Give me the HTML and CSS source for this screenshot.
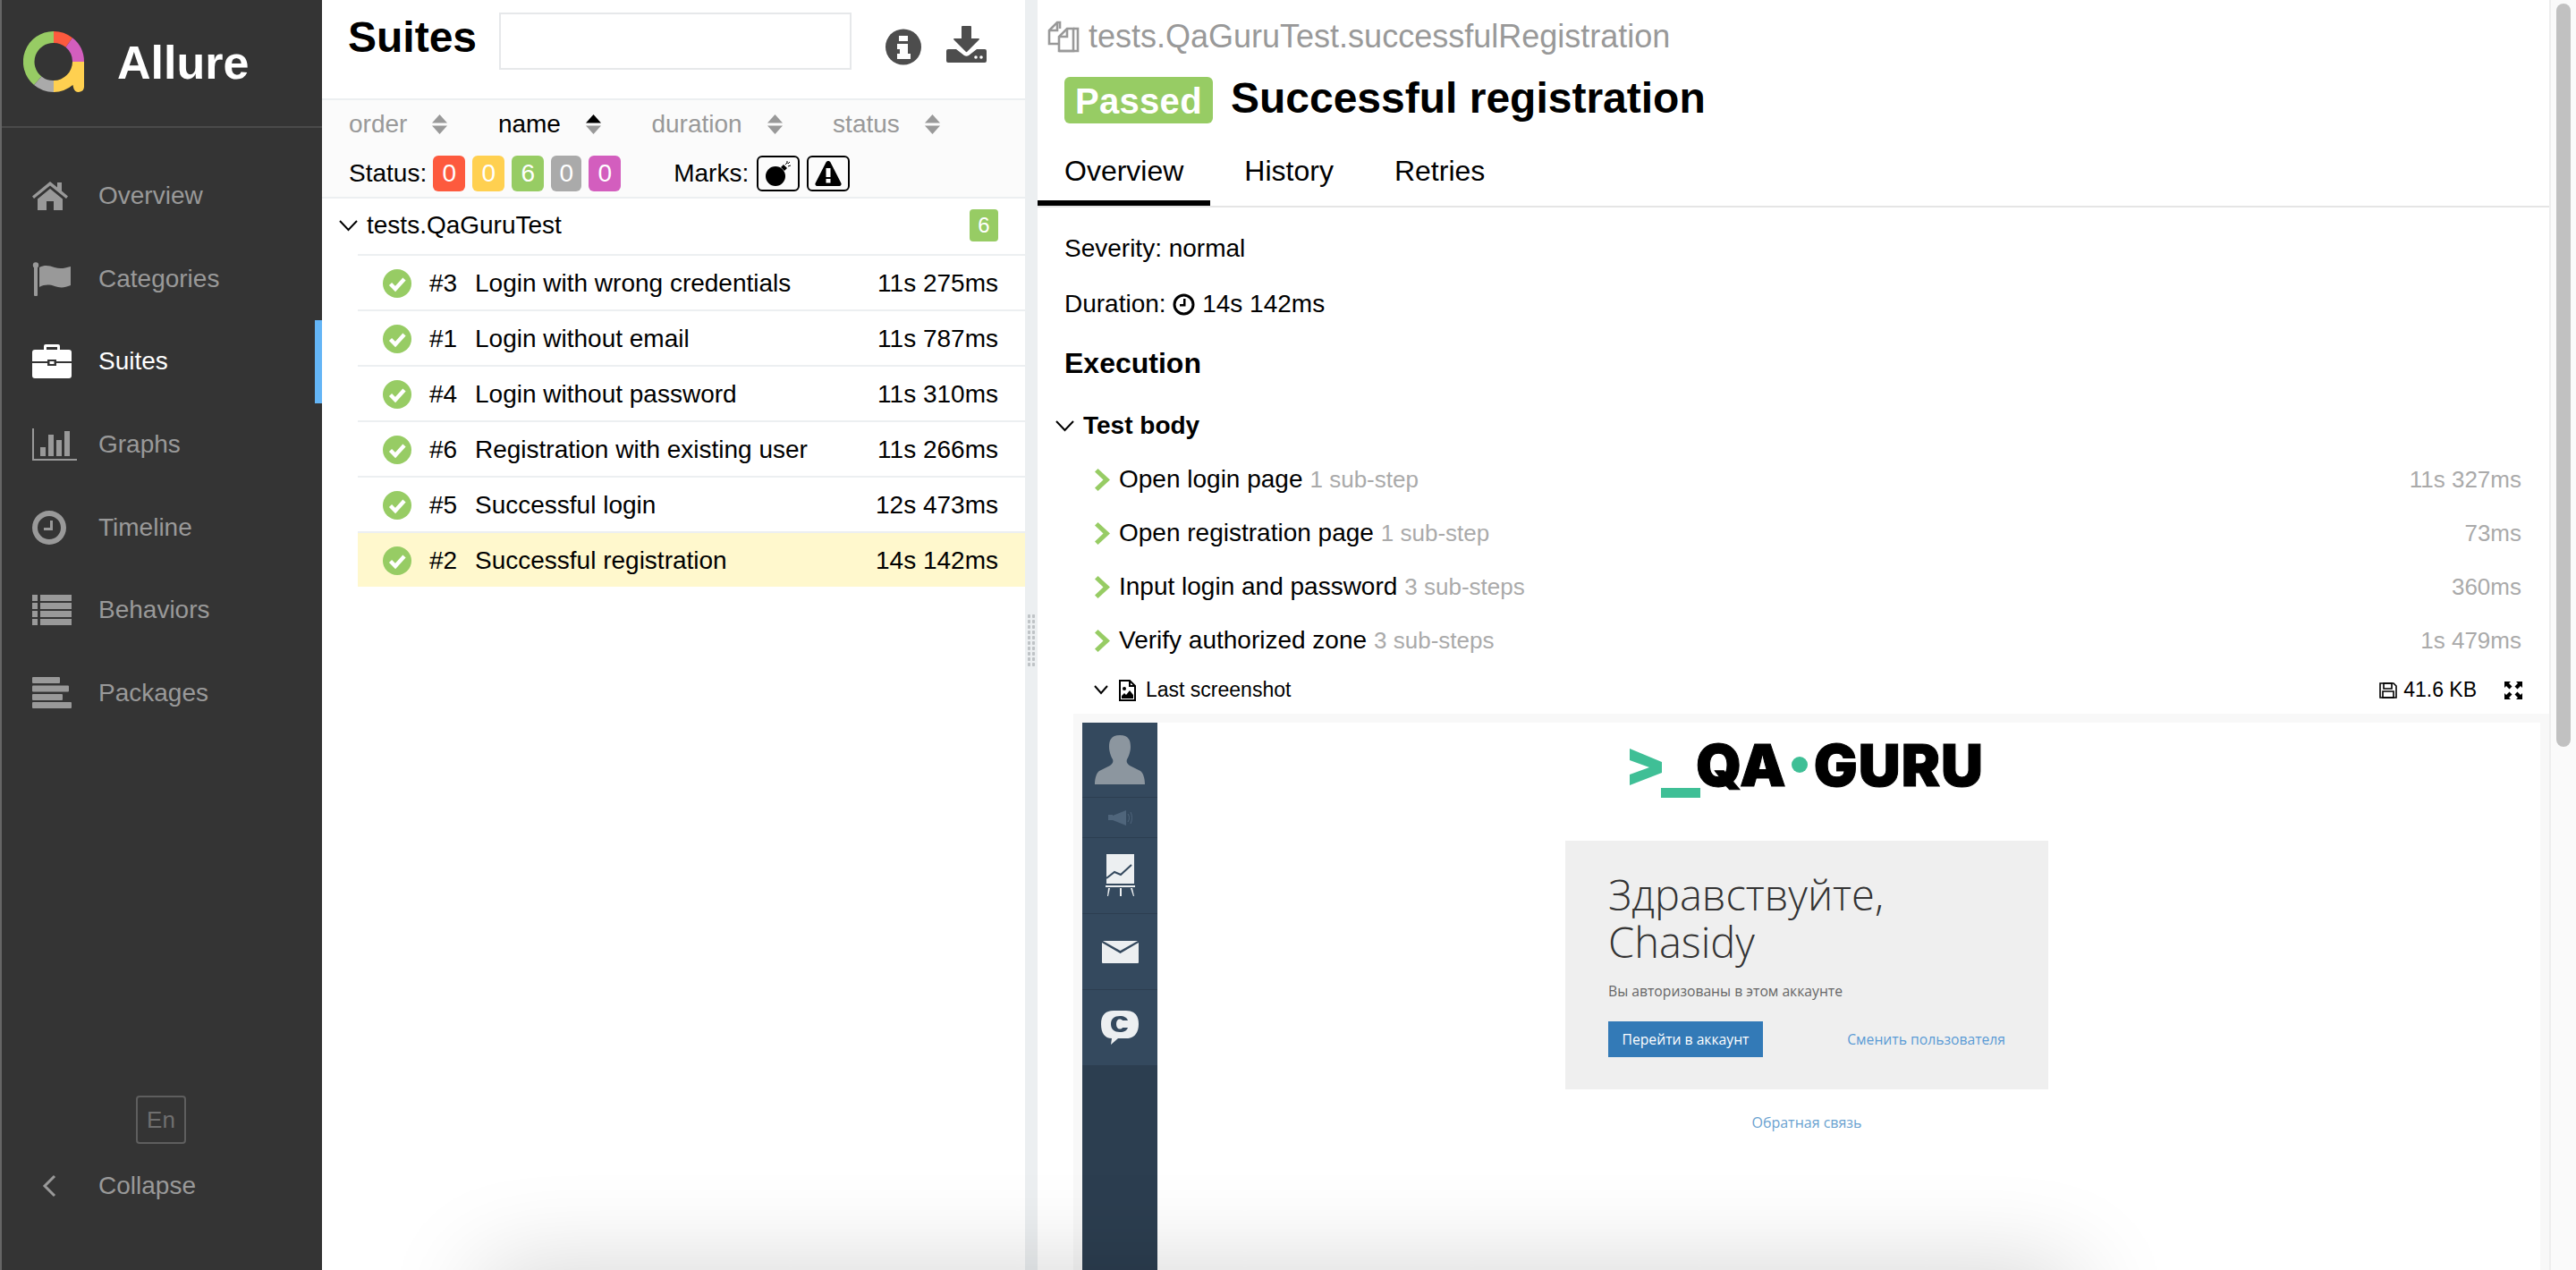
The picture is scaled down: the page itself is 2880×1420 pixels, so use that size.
FILE: index.html
```html
<!DOCTYPE html>
<html lang="en">
<head>
  <meta charset="UTF-8">
  <title>Allure Report</title>
  <link rel="stylesheet" href="styles.css">
</head>
<body>
  <svg class="defs" xmlns="http://www.w3.org/2000/svg">
    <symbol id="sort" viewBox="0 0 17 22">
      <path d="M8.5 0L17 9.5H0z"></path>
      <path d="M0 12.5h17L8.5 22z"></path>
    </symbol>
    <symbol id="passed" viewBox="0 0 32 32">
      <circle cx="16" cy="16" r="16" fill="#97cc64"></circle>
      <path d="M8.5 16.5l5.5 5.5 10-11" fill="none" stroke="#fff" stroke-width="4.4"></path>
    </symbol>
    <symbol id="step-arrow" viewBox="0 0 17 25">
      <path d="M0 3.5L3.5 0 17 12.5 3.5 25 0 21.5 9.5 12.5z"></path>
    </symbol>
  </svg>

  <aside class="sidebar">
    <div class="brand">
      <svg class="brand-logo" viewBox="0 0 68 68">
        <path d="M34 0A34 34 0 0 0 12 60l8.4-9.6A21 21 0 0 1 34 13z" fill="#97cc64"></path>
        <path d="M34 0a34 34 0 0 1 21 7.3l-7.5 10.5A21 21 0 0 0 34 13z" fill="#fd5a3e"></path>
        <path d="M55 7.3A34 34 0 0 1 68 34H55a21 21 0 0 0-7.5-16.2z" fill="#d35ebe"></path>
        <path d="M68 34v28a6 6 0 0 1-11.600 2l-1-4A34 34 0 0 1 34 68V55a21 21 0 0 0 21-21z" fill="#ffd050"></path>
        <path d="M12 60l8.400-9.600A21 21 0 0 0 34 55v13a34 34 0 0 1-22-8z" fill="#aaa"></path>
      </svg>
      <span class="brand-name">Allure</span>
    </div>
    <nav class="nav">
      <a class="nav-item">
        <span class="nav-icon">
          <svg width="40" height="32" viewBox="0 0 40 32"><path d="M20 0L0 16.500l2 2.500L20 4.500 38 19l2-2.500-7-6V1h-5v5.500z"></path><path d="M6 19.500L20 8l14 11.500V32H24V22h-8v10H6z"></path></svg>
        </span>
        Overview
      </a>
      <a class="nav-item">
        <span class="nav-icon">
          <svg width="44" height="38" viewBox="0 0 44 38"><circle cx="4" cy="3.500" r="3.200"></circle><rect x="2" y="4" width="4" height="34" rx="1"></rect><path d="M8 6c6-3 11-2 17 0 6 2 11 1 18-1v21c-7 3-12 3-18 1-6-2-11-2-17 1z"></path></svg>
        </span>
        Categories
      </a>
      <a class="nav-item active">
        <span class="nav-icon">
          <svg width="44" height="38" viewBox="0 0 44 38"><path d="M13 6V2a2 2 0 0 1 2-2h14a2 2 0 0 1 2 2v4h-3V3H16v3z"></path><path d="M3 6h38a3 3 0 0 1 3 3v10H27v-2H17v2H0V9a3 3 0 0 1 3-3z"></path><path d="M0 21h17v3h10v-3h17v14a3 3 0 0 1-3 3H3a3 3 0 0 1-3-3z"></path><rect x="19.500" y="19" width="5" height="3"></rect></svg>
        </span>
        Suites
      </a>
      <a class="nav-item">
        <span class="nav-icon">
          <svg width="50" height="36" viewBox="0 0 50 36"><path d="M0 0h2v34h48v2H0z"></path><rect x="9" y="21" width="6" height="10"></rect><rect x="18" y="7" width="6" height="24"></rect><rect x="27" y="13" width="6" height="18"></rect><rect x="36" y="3" width="6" height="28"></rect></svg>
        </span>
        Graphs
      </a>
      <a class="nav-item">
        <span class="nav-icon">
          <svg width="38" height="38" viewBox="0 0 38 38"><path d="M19 0a19 19 0 1 0 0 38 19 19 0 0 0 0-38zm0 6a13 13 0 1 1 0 26 13 13 0 0 1 0-26z"></path><path d="M20 11h3v11h-10v-3h7z"></path></svg>
        </span>
        Timeline
      </a>
      <a class="nav-item">
        <span class="nav-icon">
          <svg width="44" height="34" viewBox="0 0 44 34"><rect width="6" height="7"></rect><rect y="9" width="6" height="7"></rect><rect y="18" width="6" height="7"></rect><rect y="27" width="6" height="7"></rect><rect x="9" width="35" height="7"></rect><rect x="9" y="9" width="35" height="7"></rect><rect x="9" y="18" width="35" height="7"></rect><rect x="9" y="27" width="35" height="7"></rect></svg>
        </span>
        Behaviors
      </a>
      <a class="nav-item">
        <span class="nav-icon">
          <svg width="44" height="35" viewBox="0 0 44 35"><rect width="31" height="7" rx="1"></rect><rect y="9.500" width="41" height="7" rx="1"></rect><rect y="19" width="34" height="7" rx="1"></rect><rect y="28" width="44" height="7" rx="1"></rect></svg>
        </span>
        Packages
      </a>
    </nav>
    <div class="sidebar-footer">
      <button class="lang-btn">En</button>
      <a class="nav-item collapse-item">
        <span class="nav-icon collapse-icon">
          <svg width="16" height="26" viewBox="0 0 16 26"><path d="M14 2L3 13l11 11" fill="none" stroke="#999" stroke-width="3"></path></svg>
        </span>
        Collapse
      </a>
    </div>
  </aside>

  <main class="suites">
    <header class="suites-head">
      <h2 class="suites-title">Suites</h2>
      <input class="search" type="text">
      <svg class="head-icon info-icon" viewBox="0 0 40 41"><circle cx="20" cy="20.500" r="20" fill="#4d4d4d"></circle><path d="M15 8h10v6H15zM13 17h12v11h3v6H13v-6h3v-5h-3z" fill="#fff"></path></svg>
      <svg class="head-icon download-icon" viewBox="0 0 45 41"><path d="M18 0h9a1 1 0 0 1 1 1v13h8a1 1 0 0 1 1 1L23 29a1 1 0 0 1-1 0L8 15a1 1 0 0 1 1-1h8V1a1 1 0 0 1 1-1z" fill="#4d4d4d"></path><path d="M2 26h9l9 7c1.500 1 3.500 1 5 0l9-7h9a2 2 0 0 1 2 2v11a2 2 0 0 1-2 2H2a2 2 0 0 1-2-2V28a2 2 0 0 1 2-2z" fill="#4d4d4d"></path><circle cx="33" cy="35" r="1.800" fill="#fff"></circle><circle cx="39" cy="35" r="1.800" fill="#fff"></circle></svg>
    </header>

    <div class="toolbar">
      <div class="sorters">
        <span class="sorter">order<svg class="sort-icon"><use href="#sort"></use></svg></span>
        <span class="sorter sorter-on">name<svg class="sort-icon" viewBox="0 0 17 22"><path d="M8.500 0L17 9.500H0z" fill="#000"></path><path d="M0 12.500h17L8.500 22z" fill="#999"></path></svg></span>
        <span class="sorter">duration<svg class="sort-icon"><use href="#sort"></use></svg></span>
        <span class="sorter">status<svg class="sort-icon"><use href="#sort"></use></svg></span>
      </div>
      <div class="filters">
        <span class="filter-label">Status:</span>
        <span class="badge badge-failed">0</span>
        <span class="badge badge-broken">0</span>
        <span class="badge badge-passed">6</span>
        <span class="badge badge-skipped">0</span>
        <span class="badge badge-unknown">0</span>
        <span class="filter-label marks-label">Marks:</span>
        <span class="mark">
          <svg width="30" height="30" viewBox="0 0 30 30"><circle cx="12" cy="18" r="11"></circle><path d="M18 8l3-3 4 4-3 3z"></path><path d="M23 5l2-2M26 7l3-1M25 1v3M28 2l-2 2" fill="none" stroke="#000" stroke-width="1"></path></svg>
        </span>
        <span class="mark">
          <svg width="30" height="28" viewBox="0 0 30 28"><path d="M15 0c1 0 2 .5 2.500 1.500L29.500 25c.5 1.500-.5 3-2 3h-25c-1.500 0-2.500-1.500-2-3L12.500 1.500C13 .5 14 0 15 0z"></path><rect x="12.500" y="8" width="5" height="10" fill="#fff"></rect><rect x="12.500" y="20" width="5" height="4.500" fill="#fff"></rect></svg>
        </span>
      </div>
    </div>

    <div class="tree">
      <div class="group">
        <svg class="chevron" width="21" height="13" viewBox="0 0 21 13"><path d="M1 1l9.500 10L20 1" fill="none" stroke="#000" stroke-width="2"></path></svg>
        <span class="group-name">tests.QaGuruTest</span>
        <span class="group-count">6</span>
      </div>
      <div class="row">
        <svg class="status-icon"><use href="#passed"></use></svg>
        <span class="row-order">#3</span><span class="row-name">Login with wrong credentials</span><span class="row-time">11s 275ms</span>
      </div>
      <div class="row">
        <svg class="status-icon"><use href="#passed"></use></svg>
        <span class="row-order">#1</span><span class="row-name">Login without email</span><span class="row-time">11s 787ms</span>
      </div>
      <div class="row">
        <svg class="status-icon"><use href="#passed"></use></svg>
        <span class="row-order">#4</span><span class="row-name">Login without password</span><span class="row-time">11s 310ms</span>
      </div>
      <div class="row">
        <svg class="status-icon"><use href="#passed"></use></svg>
        <span class="row-order">#6</span><span class="row-name">Registration with existing user</span><span class="row-time">11s 266ms</span>
      </div>
      <div class="row">
        <svg class="status-icon"><use href="#passed"></use></svg>
        <span class="row-order">#5</span><span class="row-name">Successful login</span><span class="row-time">12s 473ms</span>
      </div>
      <div class="row row-selected">
        <svg class="status-icon"><use href="#passed"></use></svg>
        <span class="row-order">#2</span><span class="row-name">Successful registration</span><span class="row-time">14s 142ms</span>
      </div>
    </div>
  </main>

  <div class="splitter"><span class="splitter-grip"></span></div>

  <section class="detail">
    <div class="detail-path">
      <svg class="copy-icon" width="36" height="36" viewBox="0 0 36 36" fill="none" stroke="#999" stroke-width="2.600"><path d="M14 9V2h-3L2 11v15h11"></path><path d="M11 2v9H2"></path><path d="M13 34V18l9-9h7v25z" fill="#fff"></path><path d="M22 9v9h-9"></path><path d="M29 9h5v25H13"></path></svg>
      <span>tests.QaGuruTest.successfulRegistration</span>
    </div>
    <div class="detail-title">
      <span class="status-pill">Passed</span>
      <h2 class="test-name">Successful registration</h2>
    </div>
    <div class="tabs">
      <a class="tab tab-on">Overview</a>
      <a class="tab">History</a>
      <a class="tab">Retries</a>
    </div>

    <div class="meta meta-first">Severity: normal</div>
    <div class="meta">Duration:
      <svg class="clock" width="25" height="25" viewBox="0 0 25 25"><circle cx="12.500" cy="12.500" r="10.500" fill="none" stroke="#000" stroke-width="3"></circle><path d="M12 6h2.500v8.500H8V12h4z"></path></svg>
      14s 142ms</div>
    <h3 class="exec-title">Execution</h3>

    <div class="body-head">
      <svg class="chevron" width="21" height="13" viewBox="0 0 21 13"><path d="M1 1l9.500 10L20 1" fill="none" stroke="#000" stroke-width="2"></path></svg>
      Test body
    </div>
    <div class="step">
      <svg class="step-arrow"><use href="#step-arrow"></use></svg>
      <span class="step-name">Open login page</span><span class="step-sub">1 sub-step</span>
      <span class="step-time">11s 327ms</span>
    </div>
    <div class="step">
      <svg class="step-arrow"><use href="#step-arrow"></use></svg>
      <span class="step-name">Open registration page</span><span class="step-sub">1 sub-step</span>
      <span class="step-time">73ms</span>
    </div>
    <div class="step">
      <svg class="step-arrow"><use href="#step-arrow"></use></svg>
      <span class="step-name">Input login and password</span><span class="step-sub">3 sub-steps</span>
      <span class="step-time">360ms</span>
    </div>
    <div class="step">
      <svg class="step-arrow"><use href="#step-arrow"></use></svg>
      <span class="step-name">Verify authorized zone</span><span class="step-sub">3 sub-steps</span>
      <span class="step-time">1s 479ms</span>
    </div>

    <div class="attachment">
      <svg class="attach-chevron" width="16" height="11" viewBox="0 0 16 11"><path d="M1 1l7 8 7-8" fill="none" stroke="#000" stroke-width="2"></path></svg>
      <svg class="attach-file" width="19" height="24" viewBox="0 0 19 24"><path d="M1 1h11l6 6v16H1z" fill="#fff" stroke="#000" stroke-width="2"></path><path d="M12 1v6h6" fill="none" stroke="#000" stroke-width="2"></path><circle cx="6" cy="10" r="2"></circle><path d="M3 21v-3l3-3 2 2 4-5 4 5v4z"></path></svg>
      <span class="attach-name">Last screenshot</span>
      <svg class="attach-save" width="20" height="18" viewBox="0 0 20 18"><path d="M1 1h15l3 3v13H1z" fill="none" stroke="#000" stroke-width="1.600"></path><path d="M5 1h9v6H5zM4 10h12v7H4z" fill="none" stroke="#000" stroke-width="1.600"></path></svg>
      <span class="attach-size">41.6 KB</span>
      <svg class="attach-expand" width="20" height="20" viewBox="0 0 20 20"><path d="M0 0h7L5 2l3.500 3.500-3 3L2 5 0 7zM20 0v7l-2-2-3.500 3.500-3-3L15 2l-2-2zM0 20v-7l2 2 3.500-3.500 3 3L5 18l2 2zM20 20h-7l2-2-3.500-3.500 3-3L18 15l2-2z"></path></svg>
    </div>

    <div class="shot">
      <div class="shot-page">
        <div class="shot-nav">
          <div class="shot-nav-item shot-nav-user">
            <svg width="56" height="55" viewBox="0 0 56 55"><path d="M28 0c10 0 12 6 12 13 0 5-2 11-4 14-1 3 0 5 3 7l12 6c3 2 5 8 5 15H0c0-7 2-13 5-15l12-6c3-2 4-4 3-7-2-3-4-9-4-14 0-7 2-13 12-13z" fill="#8c969f"></path></svg>
          </div>
          <div class="shot-nav-item shot-nav-sound">
            <svg width="27" height="17" viewBox="0 0 27 17"><rect y="5" width="5" height="6" fill="#4f657b"></rect><path d="M5 6l15-6v17L5 11z" fill="#4f657b"></path><path d="M22 4c2 3 2 6 0 9M25 2c2 4 2 9 0 13" fill="none" stroke="#4f657b" stroke-width="1"></path></svg>
          </div>
          <div class="shot-nav-item">
            <svg width="33" height="48" viewBox="0 0 33 48"><rect x="1" width="31" height="33" fill="#eceff1"></rect><path d="M1 27l9-7 7 3 12-11" fill="none" stroke="#34495e" stroke-width="2"></path><path d="M0 35h33v2H0zM3 38h2l-2 9H2zM16 38h2v9h-2zM28 38h2l2 9h-1z" fill="#eceff1"></path></svg>
          </div>
          <div class="shot-nav-item">
            <svg width="41" height="25" viewBox="0 0 41 25"><path d="M1 0h39L20.500 11z" fill="#eceff1"></path><path d="M0 2l20.500 12L41 2v22a1 1 0 0 1-1 1H1a1 1 0 0 1-1-1z" fill="#eceff1"></path></svg>
          </div>
          <div class="shot-nav-item">
            <svg width="42" height="46" viewBox="0 0 42 46"><path d="M14 0h14c9 0 14 5 14 15s-5 16-14 16H19l-8 7 1-7C4 31 0 25 0 15S5 0 14 0z" fill="#eceff1" transform="translate(0 4)"></path><path d="M30 15c-1-3-4-5-9-5-6 0-10 3-10 9s4 9 10 9c5 0 8-2 9-5h-6c-.5 1-2 1.500-3 1.500-2.500 0-4-2-4-5.500s1.500-5.500 4-5.500c1 0 2.500.5 3 1.500z" fill="#34495e"></path></svg>
          </div>
        </div>
        <div class="shot-main">
          <div class="qa-logo">
            <svg class="qa-prompt" width="80" height="60" viewBox="0 0 80 60"><path d="M0 5l36 15v12L0 46V34l22-8L0 18z" fill="#3fbf96"></path><rect x="35" y="49" width="44" height="11" fill="#3fbf96"></rect></svg>
            <span class="qa-word">QA</span>
            <span class="qa-dot"></span>
            <span class="qa-word">GURU</span>
          </div>
          <div class="hello-card">
            <h1 class="hello-title">Здравствуйте,<br>Chasidy</h1>
            <p class="hello-text">Вы авторизованы в этом аккаунте</p>
            <div class="hello-actions">
              <a class="hello-btn">Перейти в аккаунт</a>
              <a class="hello-link">Сменить пользователя</a>
            </div>
          </div>
          <a class="feedback">Обратная связь</a>
        </div>
      </div>
    </div>
  </section>

  <div class="scrollbar"><span class="scroll-thumb"></span></div>

  <div class="window-shadow"></div>
</body>
</html>
```

FILE: styles.css
```css
* {
  margin: 0;
  padding: 0;
  box-sizing: border-box;
}

html, body {
  height: 100%;
  overflow: hidden;
}

body {
  display: flex;
  font-family: "Liberation Sans", Arial, sans-serif;
  font-size: 28px;
  color: #000;
  background-color: #fff;
}

.defs {
  position: absolute;
  width: 0;
  height: 0;
}

/* sidebar */
.sidebar {
  width: 360px;
  flex: none;
  display: flex;
  flex-direction: column;
  background-color: #343434;
  border-left: 2px solid #666;
}

.brand {
  height: 143px;
  flex: none;
  display: flex;
  align-items: center;
  padding-left: 24px;
  padding-bottom: 2px;
  border-bottom: 2px solid #4a4a4a;
}

.brand-logo {
  width: 68px;
  height: 68px;
  margin-bottom: 2px;
}

.brand-name {
  margin-left: 37px;
  font-size: 52px;
  font-weight: 700;
  color: #fff;
}

.nav {
  flex: 1;
  padding-top: 30px;
}

.nav-item {
  height: 92.6px;
  display: flex;
  align-items: center;
  padding-left: 34px;
  color: #999;
  position: relative;
}

.nav-item svg {
  fill: #999;
}

.nav-icon {
  width: 74px;
  flex: none;
  display: flex;
}

.nav-item.active {
  color: #fff;
}

.nav-item.active svg {
  fill: #fff;
}

.nav-item.active::after {
  content: '';
  position: absolute;
  top: 0;
  right: 0;
  bottom: 0;
  width: 8px;
  background-color: #64b5f6;
}

.sidebar-footer {
  flex: none;
  display: flex;
  flex-direction: column;
  padding-bottom: 48px;
}

.lang-btn {
  align-self: center;
  width: 56px;
  height: 54px;
  margin-right: 2px;
  margin-bottom: 1px;
  background: transparent;
  border: 2px solid #5e5e5e;
  border-radius: 4px;
  color: #6f6f6f;
  font-family: inherit;
  font-size: 26px;
}

.collapse-item {
  height: 92px;
}

.collapse-icon {
  padding-left: 11px;
}

/* suites pane */
.suites {
  width: 786px;
  flex: none;
  display: flex;
  flex-direction: column;
}

.suites-head {
  height: 112px;
  flex: none;
  display: flex;
  align-items: flex-start;
  border-bottom: 2px solid #eceff1;
}

.suites-title {
  margin: 14px 0 0 29px;
  font-size: 48px;
  line-height: 56px;
  font-weight: 700;
}

.search {
  width: 394px;
  height: 64px;
  margin: 14px 0 0 25px;
  border: 2px solid #e6e8ea;
  background-color: #fff;
}

.head-icon {
  flex: none;
}

.info-icon {
  width: 40px;
  height: 41px;
  margin: 32px 0 0 38px;
}

.download-icon {
  width: 45px;
  height: 41px;
  margin: 29px 0 0 28px;
}

.toolbar {
  height: 110px;
  flex: none;
  padding-left: 30px;
  background-color: #fbfbfb;
  border-bottom: 2px solid #eceff1;
}

.sorters {
  height: 54px;
  display: flex;
  align-items: center;
  gap: 56.5px;
}

.sorter {
  display: flex;
  align-items: center;
  gap: 28px;
  color: #999;
}

.sorter-on {
  color: #000;
}

.sort-icon {
  width: 17px;
  height: 22px;
  fill: #999;
}

.filters {
  display: flex;
  align-items: center;
  margin-top: 8px;
  gap: 8px;
}

.badge {
  width: 36px;
  height: 40px;
  display: flex;
  align-items: center;
  justify-content: center;
  border-radius: 6px;
  color: #fff;
}

.badge-failed {
  background-color: #fd5a3e;
}

.badge-broken {
  background-color: #ffd050;
}

.badge-passed {
  background-color: #97cc64;
}

.badge-skipped {
  width: 34px;
  background-color: #aaa;
}

.badge-unknown {
  background-color: #d35ebe;
}

.filter-label {
  margin-right: -1px;
}

.marks-label {
  margin-left: 51px;
  margin-right: 1px;
}

.mark {
  width: 48px;
  height: 40px;
  display: flex;
  align-items: center;
  justify-content: center;
  border: 2px solid #000;
  border-radius: 6px;
}

.group {
  height: 64px;
  display: flex;
  align-items: center;
  padding: 0 30px 4px 19px;
  position: relative;
}

.group::after {
  content: '';
  position: absolute;
  left: 40px;
  right: 0;
  bottom: 0;
  height: 2px;
  background-color: #eceff1;
}

.group .chevron {
  margin-right: 10px;
}

.group-name {
  flex: 1;
}

.group-count {
  width: 32px;
  height: 36px;
  display: flex;
  align-items: center;
  justify-content: center;
  border-radius: 4px;
  background-color: #97cc64;
  color: #fff;
  font-size: 24px;
}

.row {
  height: 62px;
  margin-left: 40px;
  display: flex;
  align-items: center;
  padding: 2px 30px 0 28px;
  border-bottom: 2px solid #eceff1;
}

.row-selected {
  background-color: #fff8cd;
  background-clip: padding-box;
  border-bottom-color: transparent;
}

.status-icon {
  width: 32px;
  height: 32px;
  flex: none;
  margin-right: 20px;
}

.row-order {
  width: 51px;
  flex: none;
}

.row-name {
  flex: 1;
}

/* splitter */
.splitter {
  width: 14px;
  flex: none;
  display: flex;
  align-items: center;
  justify-content: center;
  background-color: #eceff1;
}

.splitter-grip {
  width: 10px;
  height: 60px;
  background-image: radial-gradient(#bfc3c6 1.5px, transparent 2px);
  background-size: 5px 6px;
  margin-top: 12px;
}

/* detail pane */
.detail {
  flex: 1;
  min-width: 0;
  display: flex;
  flex-direction: column;
  overflow: hidden;
}

.detail-path {
  height: 82px;
  flex: none;
  display: flex;
  align-items: center;
  padding-left: 11px;
  font-size: 36px;
  color: #999;
}

.copy-icon {
  margin-right: 10px;
}

.detail-title {
  height: 70px;
  flex: none;
  display: flex;
  align-items: flex-start;
  padding: 4px 0 0 30px;
}

.status-pill {
  height: 52px;
  padding: 0 12px;
  border-radius: 6px;
  background-color: #97cc64;
  color: #fff;
  font-size: 40px;
  line-height: 54px;
  font-weight: 700;
  letter-spacing: 0.3px;
}

.test-name {
  margin-left: 20px;
  font-size: 48px;
  line-height: 48px;
  font-weight: 700;
}

.tabs {
  height: 80px;
  flex: none;
  display: flex;
  gap: 8px;
  border-bottom: 2px solid #e5e5e5;
}

.tab {
  height: 78px;
  padding: 0 30px;
  font-size: 32px;
  line-height: 78px;
}

.tab-on {
  border-bottom: 6px solid #000;
}

.meta {
  height: 62px;
  flex: none;
  padding-left: 30px;
  line-height: 62px;
}

.meta-first {
  margin-top: 15px;
}

.clock {
  vertical-align: -4px;
}

.exec-title {
  height: 60px;
  flex: none;
  margin-top: 5px;
  padding-left: 30px;
  font-size: 32px;
  line-height: 60px;
  font-weight: 700;
}

.body-head {
  height: 60px;
  flex: none;
  margin-top: 10px;
  display: flex;
  align-items: center;
  padding-left: 20px;
  font-weight: 700;
}

.body-head .chevron {
  margin-right: 10px;
}

.step {
  height: 60px;
  flex: none;
  display: flex;
  align-items: baseline;
  padding: 0 31px 0 64px;
  line-height: 60px;
  position: relative;
}

.step-arrow {
  width: 17px;
  height: 25px;
  fill: #97cc64;
  align-self: center;
  margin-right: 10px;
}

.step-sub {
  margin-left: 8px;
  font-size: 26px;
  color: #aaa;
}

.step-time {
  margin-left: auto;
  font-size: 26px;
  color: #aaa;
}

.attachment {
  height: 51px;
  flex: none;
  display: flex;
  align-items: center;
  padding: 0 30px 0 63px;
  font-size: 23px;
}

.attach-chevron {
  margin-right: 12px;
}

.attach-name {
  margin-left: 11px;
  flex: 1;
}

.attach-size {
  margin: 0 31px 0 7px;
}

.shot {
  flex: 1;
  min-height: 0;
  margin: 1px 0 0 40px;
  padding: 10px 10px 0;
  background-color: #f8f8f8;
}

.shot-page {
  height: 100%;
  display: flex;
  background-color: #fff;
}

.shot-nav {
  width: 84px;
  flex: none;
  background-color: #2c3e50;
}

.shot-nav-item {
  height: 85px;
  display: flex;
  align-items: center;
  justify-content: center;
  background-color: #34495e;
  border-bottom: 1px solid #2c3e50;
}

.shot-nav-user {
  height: 84px;
}

.shot-nav-sound {
  height: 45px;
}

.shot-main {
  flex: 1;
  display: flex;
  flex-direction: column;
  align-items: center;
  padding: 18px 94px 0 0;
}

.qa-logo {
  height: 60px;
  display: flex;
  align-items: flex-start;
  margin-top: 6px;
}

.qa-prompt {
  margin-right: -6px;
}

.qa-word {
  font-family: Inter, "Liberation Sans", sans-serif;
  font-size: 65px;
  line-height: 48px;
  font-weight: 900;
  letter-spacing: 1px;
  -webkit-text-stroke: 1px #000;
}

.qa-dot {
  width: 18px;
  height: 18px;
  margin: 14px 7px 0 5px;
  border-radius: 50%;
  background-color: #3fbf96;
}

.hello-card {
  width: 540px;
  height: 278px;
  margin-top: 48px;
  padding: 34px 48px 0;
  background-color: #efefef;
}

.hello-title {
  font-family: "Open Sans", "Liberation Sans", sans-serif;
  font-size: 47px;
  line-height: 53px;
  font-weight: 300;
  color: #333;
}

.hello-text {
  margin-top: 17px;
  font-family: "Open Sans", "Liberation Sans", sans-serif;
  font-size: 15.7px;
  color: #666;
}

.hello-actions {
  margin-top: 23px;
  display: flex;
  align-items: center;
  justify-content: space-between;
  font-family: "Open Sans", "Liberation Sans", sans-serif;
  font-size: 15.7px;
}

.hello-btn {
  width: 173px;
  height: 40px;
  display: flex;
  align-items: center;
  justify-content: center;
  background-color: #337ab7;
  color: #fff;
}

.hello-link {
  color: #5b9bd5;
}

.feedback {
  margin-top: 26px;
  font-family: "Open Sans", "Liberation Sans", sans-serif;
  font-size: 16px;
  color: #6aa2d0;
}

/* page scrollbar */
.scrollbar {
  width: 30px;
  flex: none;
  padding: 4px 6px 0 6px;
  background-color: #fafafa;
  border-left: 2px solid #eee;
}

.scroll-thumb {
  display: block;
  width: 16px;
  height: 831px;
  border-radius: 8px;
  background-color: #c1c1c1;
}

/* shadow of the window below, falls over everything */
.window-shadow {
  position: fixed;
  left: 540px;
  top: 1420px;
  width: 1780px;
  height: 100px;
  box-shadow: 0 0 110px rgba(0, 0, 0, 0.18);
  pointer-events: none;
}
```
